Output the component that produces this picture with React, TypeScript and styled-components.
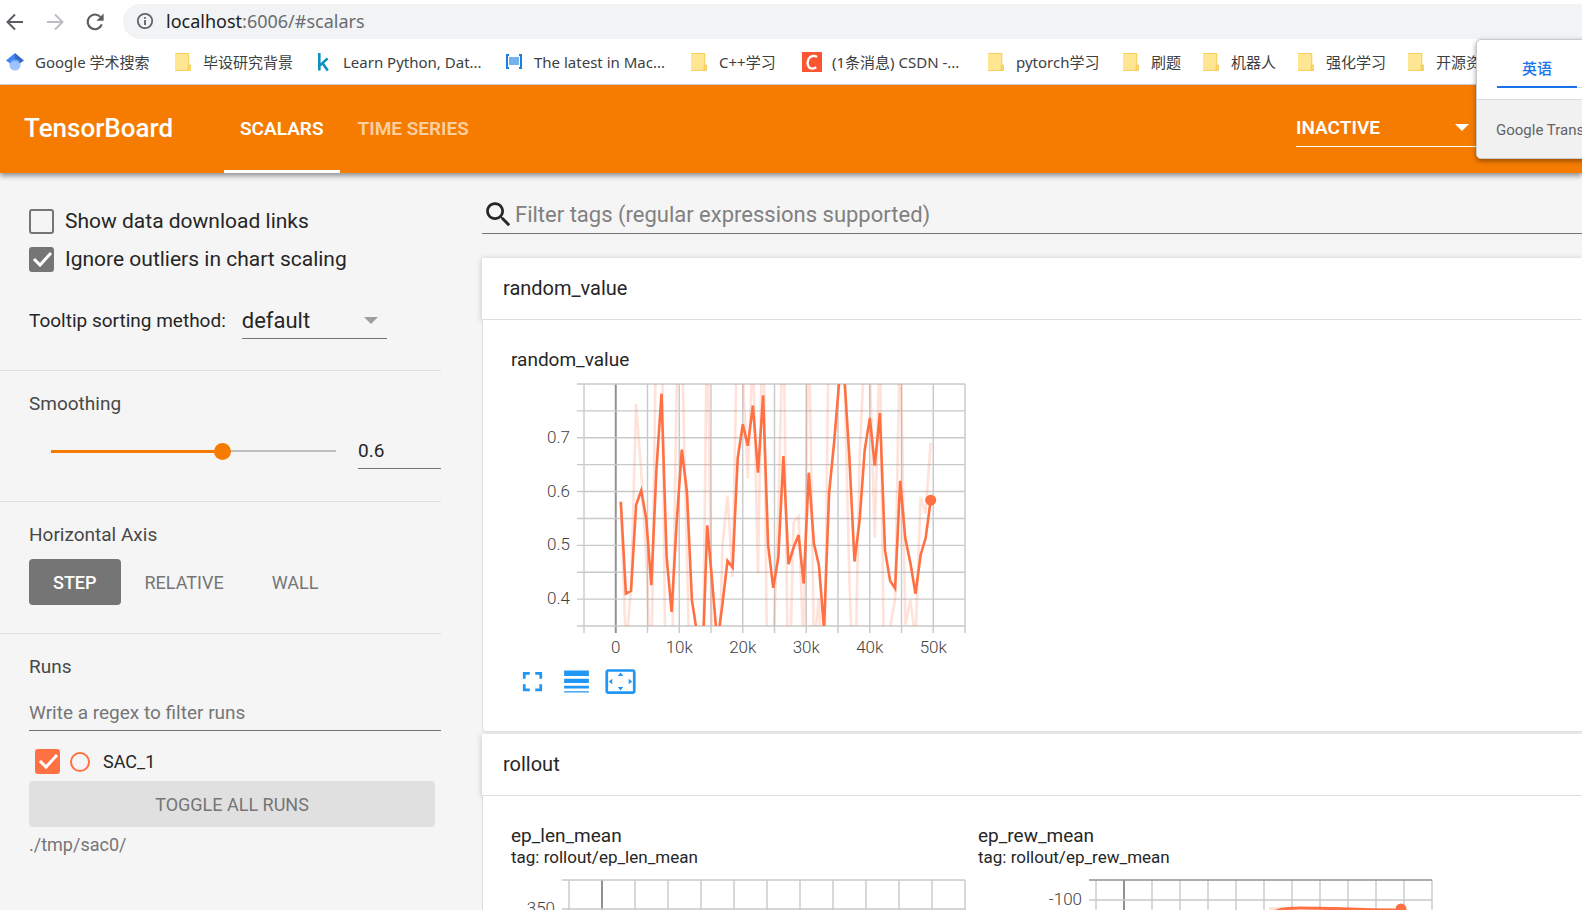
import React, { useState } from "react";
import styled, { createGlobalStyle } from "styled-components";

const GlobalStyle = createGlobalStyle`
  *, *::before, *::after { box-sizing: border-box; }
  body {
    margin: 0;
    background: #f5f5f5;
    color: #262626;
    font-family: Roboto, "Noto Sans CJK SC", sans-serif;
  }
  input, select, button { font: inherit; color: inherit; }
`;

const ORANGE = "#f57c00";
const RUN = "#ff7043";
const RULE = "#757575";

const Shell = styled.div`
  position: relative;
  display: flex;
  flex-direction: column;
  height: 100vh;
  overflow: hidden;
`;

/* ---------- browser chrome ---------- */

const Chrome = styled.div`
  flex: none;
  background: #fff;
  border-bottom: 1px solid #d5d7da;
  font-family: "Noto Sans", "Noto Sans CJK SC", sans-serif;
`;

const NavBar = styled.div`
  display: flex;
  align-items: center;
  padding: 4px 0 0 3px;
`;

const NavButton = styled.button<{ $dim?: boolean }>`
  display: flex;
  align-items: center;
  justify-content: center;
  width: 24px;
  height: 24px;
  margin-right: 16px;
  padding: 0;
  border: 0;
  background: none;
  color: ${(p) => (p.$dim ? "#bcbec1" : "#5a5d61")};
`;

const AddressBar = styled.div`
  flex: 1;
  display: flex;
  align-items: center;
  gap: 12px;
  height: 35px;
  padding: 0 0 2px 13px;
  border-radius: 18px 0 0 18px;
  background: #f1f3f4;
  color: #5f6368;
`;

const Address = styled.div`
  font-size: 18px;
  line-height: 24px;
  color: #6a6d71;
`;

const Host = styled.span`
  color: #202124;
`;

const Bookmarks = styled.nav`
  display: flex;
  align-items: center;
  height: 45px;
  padding-left: 5px;
  overflow: hidden;
`;

const Bookmark = styled.a`
  flex: none;
  display: flex;
  align-items: center;
  gap: 10px;
  margin-right: 20px;
  color: #3c4043;
  font-size: 15px;
  line-height: 20px;
  text-decoration: none;
  white-space: nowrap;
`;

const BookmarkLabel = styled.span<{ $width: number }>`
  width: ${(p) => p.$width}px;
`;

/* ---------- translate popup ---------- */

const Popup = styled.aside`
  position: absolute;
  top: 39px;
  right: -180px;
  z-index: 5;
  width: 286px;
  border: 1px solid #c8cacd;
  border-radius: 5px;
  overflow: hidden;
  background: #fff;
  box-shadow: 0 2px 5px rgba(0, 0, 0, 0.4);
`;

const PopupTabs = styled.div`
  display: flex;
  padding: 9px 20px 11px;
  border-bottom: 1px solid #dadce0;
`;

const PopupTab = styled.button`
  width: 80px;
  height: 39px;
  padding: 0;
  border: 0;
  border-bottom: 2px solid #1a73e8;
  background: none;
  color: #1a73e8;
  font-family: "Noto Sans CJK SC", sans-serif;
  font-size: 15px;
  font-weight: 500;
`;

const PopupRest = styled.span`
  flex: 1;
  border-bottom: 1px solid #dadce0;
`;

const PopupFooter = styled.div`
  height: 58px;
  padding-left: 19px;
  background: #f1f1f1;
  color: #5f6368;
  font-size: 15px;
  line-height: 60px;
  white-space: nowrap;
`;

/* ---------- TensorBoard header ---------- */

const Header = styled.header`
  position: relative;
  z-index: 2;
  flex: none;
  display: flex;
  align-items: center;
  height: 88px;
  padding: 0 104px 0 24px;
  background: ${ORANGE};
  color: #fff;
  box-shadow: 0 3px 5px rgba(0, 0, 0, 0.4);
`;

const Brand = styled.h1`
  width: 200px;
  margin: 0;
  padding-bottom: 2px;
  font-size: 26px;
  font-weight: 500;
  line-height: 32px;
`;

const Tabs = styled.nav`
  display: flex;
  gap: 2px;
  height: 100%;
`;

const Tab = styled.a<{ $active?: boolean }>`
  display: flex;
  align-items: center;
  padding: 1px 16px 0;
  border-bottom: 3px solid ${(p) => (p.$active ? "#fff" : "transparent")};
  color: ${(p) => (p.$active ? "#fff" : "rgba(255, 255, 255, 0.65)")};
  font-size: 19px;
  font-weight: 600;
  text-decoration: none;
`;

const SelectBox = styled.div<{ $width: number; $line: string }>`
  display: grid;
  align-items: center;
  width: ${(p) => p.$width}px;
  border-bottom: 1px solid ${(p) => p.$line};

  > * { grid-area: 1 / 1; }
  > svg { justify-self: end; pointer-events: none; }
`;

const HeaderSelect = styled(SelectBox)`
  margin: 0 0 2px auto;
  > svg { margin-right: 9px; }
`;

const SortSelect = styled(SelectBox)`
  > svg { margin-right: 9px; }
`;

const Select = styled.select<{ $size: number; $weight: number }>`
  width: 100%;
  height: 36px;
  padding: 0;
  border: 0;
  background: none;
  appearance: none;
  font-size: ${(p) => p.$size}px;
  font-weight: ${(p) => p.$weight};
`;

/* ---------- sidebar ---------- */

const Workspace = styled.div`
  flex: 1;
  display: flex;
  min-height: 0;
`;

const Sidebar = styled.aside`
  flex: none;
  width: 441px;
`;

const Section = styled.section<{ $top: number; $bottom: number }>`
  padding: ${(p) => p.$top}px 0 ${(p) => p.$bottom}px 29px;

  & + & { border-top: 1px solid #dfdfdf; }
`;

const SectionTitle = styled.h3`
  margin: 0;
  color: #484848;
  font-size: 19px;
  font-weight: 400;
  line-height: 24px;
`;

const OptionRow = styled.label`
  display: flex;
  align-items: center;
  gap: 11px;
  height: 38px;
  font-size: 21px;
`;

const TickFrame = styled.span`
  display: grid;
  width: 25px;
  height: 25px;

  > * { grid-area: 1 / 1; }
  > svg { pointer-events: none; }
`;

const TickInput = styled.input<{ $color: string }>`
  width: 25px;
  height: 25px;
  margin: 0;
  border: 2px solid ${(p) => p.$color};
  border-radius: 3px;
  appearance: none;

  &:checked { background: ${(p) => p.$color}; }
`;

const SortRow = styled.div`
  display: flex;
  align-items: center;
  gap: 16px;
  margin-top: 24px;
  font-size: 19px;
`;

const SmoothRow = styled.div`
  display: flex;
  align-items: center;
  justify-content: space-between;
  margin-top: 17px;
  padding-left: 13px;
`;

const Slider = styled.input<{ $fill: number }>`
  width: 303px;
  height: 18px;
  margin: 0;
  appearance: none;
  background:
    linear-gradient(${ORANGE}, ${ORANGE}) 9px center / calc((100% - 18px) * ${(p) => p.$fill}) 3px no-repeat,
    linear-gradient(#bdbdbd, #bdbdbd) 9px center / calc(100% - 18px) 2px no-repeat;

  &::-webkit-slider-thumb {
    appearance: none;
    width: 17px;
    height: 17px;
    border-radius: 50%;
    background: ${ORANGE};
  }
`;

const LineInput = styled.input`
  width: 100%;
  height: 36px;
  padding: 0;
  border: 0;
  border-bottom: 1px solid ${RULE};
  border-radius: 0;
  outline: 0;
  background: none;
  font-size: 19px;

  &::placeholder { color: ${RULE}; opacity: 1; }
`;

const ValueInput = styled(LineInput)`
  width: 83px;
`;

const ControlRow = styled.div<{ $top: number }>`
  display: flex;
  margin-top: ${(p) => p.$top}px;
`;

const AxisButton = styled.button<{ $active?: boolean }>`
  height: 46px;
  padding: 0 24px;
  border: 0;
  border-radius: 4px;
  background: ${(p) => (p.$active ? RULE : "none")};
  color: ${(p) => (p.$active ? "#fff" : RULE)};
  font-size: 18px;
  font-weight: ${(p) => (p.$active ? 500 : 400)};
`;

const RunRow = styled.label`
  display: flex;
  align-items: center;
  height: 50px;
  padding: 11px 0 0 6px;
  font-size: 18px;
`;

const RunRing = styled.span`
  width: 20px;
  height: 20px;
  margin: 0 13px 0 10px;
  border: 2px solid ${RUN};
  border-radius: 50%;
`;

const ToggleButton = styled.button`
  display: block;
  width: calc(100% - 6px);
  height: 46px;
  border: 0;
  border-radius: 4px;
  background: #e0e0e0;
  color: ${RULE};
  font-size: 18px;
`;

const LogDir = styled.p`
  margin: 6px 0 0;
  color: ${RULE};
  font-size: 18px;
  line-height: 24px;
`;

/* ---------- main panel ---------- */

const Main = styled.main`
  flex: 1;
  min-width: 0;
  overflow: hidden;
  padding: 22px 0 0 41px;
`;

const FilterBar = styled.label`
  display: flex;
  align-items: center;
  height: 39px;
  margin-bottom: 24px;
  border-bottom: 1px solid ${RULE};
`;

const FilterInput = styled.input`
  flex: 1;
  padding: 0;
  border: 0;
  outline: 0;
  background: none;
  font-size: 22px;

  &::placeholder { color: #808080; opacity: 1; }
`;

const Card = styled.section`
  margin-bottom: 2px;
`;

const CardHeader = styled.h2`
  height: 62px;
  margin: 0;
  padding-left: 21px;
  border-bottom: 1px solid #dedede;
  background: #fff;
  box-shadow: 0 1px 6px rgba(0, 0, 0, 0.22);
  font-size: 20px;
  font-weight: 400;
  line-height: 61px;
`;

const CardBody = styled.div`
  position: relative;
  display: flex;
  gap: 12px;
  padding: 28px 0 33px 28px;
  border: solid #dedede;
  border-width: 0 0 1px 1px;
  border-radius: 0 0 0 4px;
  background: #fff;
`;

const ChartCard = styled.article`
  flex: none;
  width: 455px;
`;

const ChartTitle = styled.h3`
  margin: 0;
  font-size: 19px;
  font-weight: 400;
  line-height: 24px;
`;

const ChartTag = styled.p`
  margin: 0 0 10px;
  font-size: 17px;
  line-height: 18px;
`;

const Plot = styled.svg`
  display: block;
  font-size: 17px;
  font-weight: 300;
  fill: #424242;

  ${ChartTitle} + & { margin-top: 8px; }
`;

const Tools = styled.div`
  display: flex;
  gap: 11px;
  margin: 5px 0 0 5px;
`;

const ToolButton = styled.button`
  width: 33px;
  height: 33px;
  padding: 0;
  border: 0;
  background: none;
  color: #2196f3;
`;

/* ---------- icons ---------- */

const Caret = ({ color }: { color: string }) => (
  <svg width="14" height="7" viewBox="0 0 14 7">
    <path d="M0 0h14L7 7z" fill={color} />
  </svg>
);

const Icon = ({ d, size }: { d: string; size: number }) => (
  <svg width={size} height={size} viewBox="0 0 24 24" fill="currentColor" display="block">
    <path d={d} />
  </svg>
);

const SEARCH =
  "M15.5 14h-.79l-.28-.27C15.41 12.59 16 11.11 16 9.5 16 5.91 13.09 3 9.5 3S3 5.91 3 9.5 5.91 16 9.5 16c1.61 0 3.09-.59 4.23-1.57l.27.28v.79l5 4.99L20.49 19l-4.99-5zm-6 0C7.01 14 5 11.99 5 9.5S7.01 5 9.5 5 14 7.01 14 9.5 11.99 14 9.5 14z";
const TOOLS = [
  {
    name: "Toggle full screen",
    d: "M7 14H5v5h5v-2H7v-3zm-2-4h2V7h3V5H5v5zm12 7h-3v2h5v-5h-2v3zM14 5v2h3v3h2V5h-5z",
  },
  {
    name: "Toggle log scale",
    d: "M3 17h18v-2H3v2zm0 3h18v-1H3v1zm0-7h18v-3H3v3zm0-9v4h18V4H3z",
  },
  {
    name: "Fit domain to data",
    d: "M12.01 5.5L10 8h4l-1.99-2.5zM18 10v4l2.5-1.99L18 10zM6 10l-2.5 2.01L6 14v-4zm8 6h-4l2.01 2.5L14 16zm7-13H3c-1.1 0-2 .9-2 2v14c0 1.1.9 2 2 2h18c1.1 0 2-.9 2-2V5c0-1.1-.9-2-2-2zm0 16.01H3V4.99h18v14.02z",
  },
];

const Arrow = ({ flip }: { flip?: boolean }) => (
  <svg width="18" height="18" viewBox="0 0 18 18" fill="none" stroke="currentColor" strokeWidth="2">
    <path d={flip ? "M1 9h15M9 1.5L16.5 9 9 16.5" : "M17 9H2M9 1.5L1.5 9 9 16.5"} />
  </svg>
);

const Reload = () => (
  <svg width="20" height="20" viewBox="0 0 20 20">
    <path d="M16.8 12.4A7.3 7.3 0 1 1 15.3 4.9" fill="none" stroke="currentColor" strokeWidth="2.1" />
    <path d="M18.6 1.6v7.2h-7.2z" fill="currentColor" />
  </svg>
);

const Info = () => (
  <svg width="18" height="18" viewBox="0 0 18 18">
    <circle cx="9" cy="9" r="7.2" fill="none" stroke="currentColor" strokeWidth="1.8" />
    <path d="M8.1 8h1.8v5H8.1zM8.1 5h1.8v1.8H8.1z" fill="currentColor" />
  </svg>
);

const Scholar = () => (
  <svg width="20" height="20" viewBox="0 0 20 20">
    <circle cx="10" cy="13" r="5.6" fill="#a0c3ff" />
    <path d="M10 1L1 8.6l4.2 2.9a5.6 5.6 0 0 1 4.8-2.9z" fill="#4285f4" />
    <path d="M10 1l9 7.6-4.2 2.9A5.6 5.6 0 0 0 10 8.6z" fill="#356ac3" />
    <path d="M4.7 11.2a5.6 5.6 0 0 1 10.6 0 8 8 0 0 0-10.6 0z" fill="#76a7fa" />
  </svg>
);

const Folder = () => (
  <svg width="20" height="20" viewBox="0 0 20 20">
    <path d="M3 1h12.2a1 1 0 0 1 1 1v10.6l1.6 1V18a1 1 0 0 1-1 1H3a1 1 0 0 1-1-1V2a1 1 0 0 1 1-1z" fill="#ffe693" />
    <path d="M2.500 1.500h13.200v11M2.500 18.500h12.300" fill="none" stroke="#f5cf5a" />
    <path d="M15.200 13h2v5.400h-2z" fill="#ffe693" stroke="#f0c545" />
  </svg>
);

const KaggleMark = () => (
  <svg width="20" height="20" viewBox="0 0 20 20" fill="none" stroke="#0e8fc0" strokeWidth="2.6">
    <path d="M6.300 1v17.600M14.600 6.400l-7.600 7M9.400 11l5.400 7.400" />
  </svg>
);

const Barcode = () => (
  <svg width="20" height="20" viewBox="0 0 20 20" fill="none" stroke="#1a7fe0">
    <path d="M5 3H3v13h2M15 3h2v13h-2" strokeWidth="2" />
    <path d="M6 5v8M8 5v8M10 5v8M12 5v8M14 5v8" strokeWidth="1.2" />
  </svg>
);

const CsdnMark = () => (
  <svg width="20" height="20" viewBox="0 0 20 20">
    <path d="M0 0h20v20H0z" fill="#fc5531" />
    <path d="M15 5C12.500 3.300 8.800 3.500 6.900 6.300c-1.900 3-1.800 7 .3 9 1.800 1.700 4.900 1.500 7-.2" fill="none" stroke="#fff" strokeWidth="2.400" />
  </svg>
);

const Tick = () => (
  <svg width="25" height="25" viewBox="0 0 25 25" fill="none" stroke="#fff" strokeWidth="3">
    <path d="M5 12l6 6L22 6" />
  </svg>
);

/* ---------- charts ---------- */

/* Smoothed scalar, one value each 800 steps. */
const SMOOTHED = [
  0.581, 0.41, 0.415, 0.575, 0.602, 0.55, 0.426, 0.64, 0.782, 0.479, 0.376, 0.544, 0.678, 0.6, 0.398, 0.337,
  0.26, 0.537, 0.43, 0.318, 0.39, 0.471, 0.459, 0.662, 0.725, 0.685, 0.76, 0.635, 0.779, 0.501, 0.421, 0.477,
  0.666, 0.465, 0.496, 0.519, 0.429, 0.635, 0.504, 0.463, 0.345, 0.597, 0.693, 0.807, 0.813, 0.662, 0.47,
  0.547, 0.677, 0.737, 0.648, 0.746, 0.491, 0.434, 0.42, 0.62, 0.513, 0.467, 0.41, 0.482, 0.513, 0.584,
];

/* Undo the debiased exponential average to get the raw scalar back. */
const unsmooth = (values: number[], weight: number) =>
  values.map((v, i) => {
    const previous = i === 0 ? 0 : values[i - 1] * (1 - weight ** i);
    return (v * (1 - weight ** (i + 1)) - weight * previous) / (1 - weight);
  });

const RIGHT = 454;
const TOP = 4;

interface PlotProps {
  name: string;
  left: number;
  bottom: number;
  rows: { y: number; label?: string; dark?: boolean }[];
  xLabels?: string[];
  children?: React.ReactNode;
}

const ScalarPlot = ({ name, left, bottom, rows, xLabels = [], children }: PlotProps) => {
  const step = (RIGHT - left) / 12;
  const columns = Array.from({ length: 13 }, (_, i) => left + i * step);
  return (
    <Plot width="455" height="280" viewBox="0 0 455 280" role="img" aria-label={name}>
      {columns.map((x, i) => (
        <path key={x} d={`M${x} ${TOP}V${bottom + 7}`} stroke={i === 1 ? "#919191" : "#c9c9c9"} strokeWidth={i === 1 ? 2 : 1.4} />
      ))}
      {rows.map((row) => (
        <g key={row.y}>
          <path d={`M${left - 7} ${row.y}H${RIGHT}`} stroke={row.dark ? "#919191" : "#c9c9c9"} strokeWidth="1.4" />
          {row.label && (
            <text x={left - 14} y={row.y + 5} textAnchor="end">
              {row.label}
            </text>
          )}
        </g>
      ))}
      {xLabels.map((label, i) => (
        <text key={label} x={left + step + i * 2 * step} y="273" textAnchor="middle">
          {label}
        </text>
      ))}
      {children}
    </Plot>
  );
};

const RandomPlot = () => {
  const left = 73;
  const step = (RIGHT - left) / 12;
  const toX = (i: number) => left + step + ((i + 1) * 0.8 * step) / 5;
  const toY = (v: number) => TOP + ((0.8 - v) / 0.45) * 242;
  const line = (values: number[]) => values.map((v, i) => `${toX(i).toFixed(1)},${toY(v).toFixed(1)}`).join(" ");
  const rows = Array.from({ length: 10 }, (_, i) => ({
    y: TOP + (i * 242) / 9,
    label: i % 2 === 0 && i > 0 ? (0.8 - i * 0.05).toFixed(1) : undefined,
  }));
  return (
    <ScalarPlot name="random_value" left={left} bottom={246} rows={rows} xLabels={["0", "10k", "20k", "30k", "40k", "50k"]}>
      <clipPath id="random-area">
        <path d={`M${left} ${TOP}H${RIGHT}V246H${left}z`} />
      </clipPath>
      <g clipPath="url(#random-area)" fill="none" stroke={RUN} strokeWidth="2.6">
        <polyline points={line(unsmooth(SMOOTHED, 0.6))} opacity="0.2" />
        <polyline points={line(SMOOTHED)} />
      </g>
      <circle cx={toX(61)} cy={toY(0.584)} r="5.5" fill={RUN} />
    </ScalarPlot>
  );
};

const PlotTools = () => (
  <Tools>
    {TOOLS.map((tool) => (
      <ToolButton key={tool.name} type="button" aria-label={tool.name}>
        <Icon d={tool.d} size={33} />
      </ToolButton>
    ))}
  </Tools>
);

/* ---------- page ---------- */

const BOOKMARKS = [
  { icon: <Scholar />, label: "Google 学术搜索", width: 118 },
  { icon: <Folder />, label: "毕设研究背景", width: 90 },
  { icon: <KaggleMark />, label: "Learn Python, Dat...", width: 141 },
  { icon: <Barcode />, label: "The latest in Mac...", width: 135 },
  { icon: <Folder />, label: "C++学习", width: 63 },
  { icon: <CsdnMark />, label: "(1条消息) CSDN -...", width: 134 },
  { icon: <Folder />, label: "pytorch学习", width: 85 },
  { icon: <Folder />, label: "刷题", width: 30 },
  { icon: <Folder />, label: "机器人", width: 45 },
  { icon: <Folder />, label: "强化学习", width: 60 },
  { icon: <Folder />, label: "开源资料", width: 60 },
];

const TickBox = ({ color, checked, onChange }: { color: string; checked: boolean; onChange: (v: boolean) => void }) => (
  <TickFrame>
    <TickInput type="checkbox" $color={color} checked={checked} onChange={(e) => onChange(e.target.checked)} />
    {checked && <Tick />}
  </TickFrame>
);

export default function App() {
  const [links, setLinks] = useState(false);
  const [outliers, setOutliers] = useState(true);
  const [smoothing, setSmoothing] = useState(0.6);
  const [axis, setAxis] = useState("STEP");
  const [run, setRun] = useState(true);

  return (
    <Shell>
      <GlobalStyle />
      <Chrome>
        <NavBar>
          <NavButton type="button" aria-label="Back"><Arrow /></NavButton>
          <NavButton type="button" aria-label="Forward" $dim><Arrow flip /></NavButton>
          <NavButton type="button" aria-label="Reload"><Reload /></NavButton>
          <AddressBar>
            <Info />
            <Address role="textbox" aria-label="Address"><Host>localhost</Host>:6006/#scalars</Address>
          </AddressBar>
        </NavBar>
        <Bookmarks aria-label="Bookmarks">
          {BOOKMARKS.map((b) => (
            <Bookmark key={b.label} href="#">
              {b.icon}
              <BookmarkLabel $width={b.width}>{b.label}</BookmarkLabel>
            </Bookmark>
          ))}
        </Bookmarks>
      </Chrome>

      <Popup>
        <PopupTabs>
          <PopupTab type="button">英语</PopupTab>
          <PopupRest />
        </PopupTabs>
        <PopupFooter>Google Translate</PopupFooter>
      </Popup>

      <Header>
        <Brand>TensorBoard</Brand>
        <Tabs>
          <Tab href="#scalars" $active>SCALARS</Tab>
          <Tab href="#timeseries">TIME SERIES</Tab>
        </Tabs>
        <HeaderSelect $width={182} $line="#fff">
          <Select aria-label="Inactive dashboards" $size={19} $weight={600}>
            <option>INACTIVE</option>
          </Select>
          <Caret color="#fff" />
        </HeaderSelect>
      </Header>

      <Workspace>
        <Sidebar>
          <Section $top={29} $bottom={31}>
            <OptionRow>
              <TickBox color={RULE} checked={links} onChange={setLinks} />
              Show data download links
            </OptionRow>
            <OptionRow>
              <TickBox color={RULE} checked={outliers} onChange={setOutliers} />
              Ignore outliers in chart scaling
            </OptionRow>
            <SortRow>
              <label htmlFor="sorting">Tooltip sorting method:</label>
              <SortSelect $width={145} $line={RULE}>
                <Select id="sorting" $size={22} $weight={400}>
                  <option>default</option>
                </Select>
                <Caret color="#9e9e9e" />
              </SortSelect>
            </SortRow>
          </Section>

          <Section $top={21} $bottom={32}>
            <SectionTitle>Smoothing</SectionTitle>
            <SmoothRow>
              <Slider
                type="range"
                aria-label="Smoothing"
                min="0"
                max="1"
                step="0.001"
                value={smoothing}
                $fill={smoothing}
                onChange={(e) => setSmoothing(Number(e.target.value))}
              />
              <ValueInput
                aria-label="Smoothing value"
                value={smoothing}
                onChange={(e) => setSmoothing(Number(e.target.value) || 0)}
              />
            </SmoothRow>
          </Section>

          <Section $top={21} $bottom={28}>
            <SectionTitle>Horizontal Axis</SectionTitle>
            <ControlRow $top={12}>
              {["STEP", "RELATIVE", "WALL"].map((name) => (
                <AxisButton key={name} type="button" $active={axis === name} onClick={() => setAxis(name)}>
                  {name}
                </AxisButton>
              ))}
            </ControlRow>
          </Section>

          <Section $top={21} $bottom={24}>
            <SectionTitle>Runs</SectionTitle>
            <ControlRow $top={16}>
              <LineInput aria-label="Filter runs" placeholder="Write a regex to filter runs" />
            </ControlRow>
            <RunRow>
              <TickBox color={RUN} checked={run} onChange={setRun} />
              <RunRing />
              SAC_1
            </RunRow>
            <ToggleButton type="button" onClick={() => setRun(!run)}>TOGGLE ALL RUNS</ToggleButton>
            <LogDir>./tmp/sac0/</LogDir>
          </Section>
        </Sidebar>

        <Main>
          <FilterBar>
            <Icon d={SEARCH} size={33} />
            <FilterInput aria-label="Filter tags" placeholder="Filter tags (regular expressions supported)" />
          </FilterBar>

          <Card>
            <CardHeader>random_value</CardHeader>
            <CardBody>
              <ChartCard>
                <ChartTitle>random_value</ChartTitle>
                <RandomPlot />
                <PlotTools />
              </ChartCard>
            </CardBody>
          </Card>

          <Card>
            <CardHeader>rollout</CardHeader>
            <CardBody>
              <ChartCard>
                <ChartTitle>ep_len_mean</ChartTitle>
                <ChartTag>tag: rollout/ep_len_mean</ChartTag>
                <ScalarPlot name="ep_len_mean" left={58} bottom={246} rows={[{ y: TOP }, { y: 33, label: "350" }]} />
              </ChartCard>
              <ChartCard>
                <ChartTitle>ep_rew_mean</ChartTitle>
                <ChartTag>tag: rollout/ep_rew_mean</ChartTag>
                <ScalarPlot name="ep_rew_mean" left={118} bottom={246} rows={[{ y: TOP, dark: true }, { y: 24, label: "-100" }]}>
                  <g fill="none" stroke={RUN}>
                    <path d="M291 34h14" opacity="0.2" strokeWidth="6" />
                    <path d="M290 42C296 33 306 32 322 32c14 0 24 .5 36 .5s30 2 67 1.500" strokeWidth="3" />
                  </g>
                  <circle cx="423" cy="33" r="5.5" fill={RUN} />
                </ScalarPlot>
              </ChartCard>
            </CardBody>
          </Card>
        </Main>
      </Workspace>
    </Shell>
  );
}
